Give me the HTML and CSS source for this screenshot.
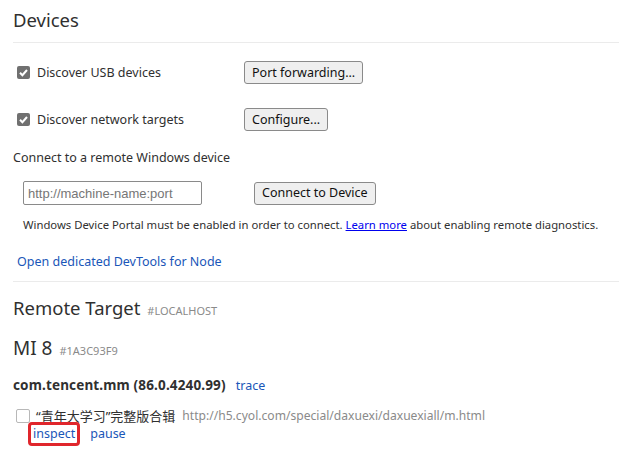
FILE: index.html
```html
<!DOCTYPE html>
<html>
<head>
<meta charset="utf-8">
<link rel="stylesheet" href="styles.css">
</head>
<body>
<div class="page">
  <section class="devices">
    <h1 class="title">Devices</h1>
    <div class="opt-row">
      <label class="opt"><span class="cb cb-on"><svg viewBox="0 0 13 13" width="13" height="13"><path d="M3 6.8 L5.4 9.2 L10 4" fill="none" stroke="#fff" stroke-width="2"/></svg></span>Discover USB devices</label>
      <button class="btn">Port forwarding...</button>
    </div>
    <div class="opt-row">
      <label class="opt"><span class="cb cb-on"><svg viewBox="0 0 13 13" width="13" height="13"><path d="M3 6.8 L5.4 9.2 L10 4" fill="none" stroke="#fff" stroke-width="2"/></svg></span>Discover network targets</label>
      <button class="btn">Configure...</button>
    </div>
    <div class="subhead">Connect to a remote Windows device</div>
    <div class="connect-row">
      <input class="addr" type="text" placeholder="http://machine-name:port">
      <button class="btn">Connect to Device</button>
    </div>
    <div class="note">Windows Device Portal must be enabled in order to connect. <a href="#" class="learn">Learn more</a> about enabling remote diagnostics.</div>
    <div class="node-link"><a href="#" class="link">Open dedicated DevTools for Node</a></div>
  </section>
  <section class="remote">
    <h1 class="title">Remote Target <span class="tag">#LOCALHOST</span></h1>
    <h2 class="device">MI 8 <span class="tag">#1A3C93F9</span></h2>
    <div class="pkg"><span class="pkg-name">com.tencent.mm (86.0.4240.99)</span><a href="#" class="link">trace</a></div>
    <div class="target">
      <span class="cb cb-off"></span>
      <span class="t-title">“青年大学习”完整版合辑</span>
      <span class="t-url">http://h5.cyol.com/special/daxuexi/daxuexiall/m.html</span>
    </div>
    <div class="actions">
      <a href="#" class="link act act-hl">inspect</a>
      <a href="#" class="link act">pause</a>
    </div>
  </section>
</div>
</body>
</html>
```
FILE: styles.css
```css
* { box-sizing: border-box; }
html, body { margin: 0; padding: 0; background: #fff; }
body {
  font-family: "Noto Sans", "Noto Sans CJK SC", sans-serif;
  font-size: 12.5px;
  color: #303030;
}
.page { padding: 0 0 0 13px; }
.title {
  margin: 0;
  font-weight: normal;
  font-size: 18.5px;
  line-height: 26px;
  color: #303030;
}
.devices .title {
  padding-top: 7px;
  height: 43px;
  border-bottom: 1px solid #ebebeb;
}
.opt-row {
  display: flex;
  align-items: center;
  height: 23px;
  margin-top: 18px;
}
.opt-row + .opt-row { margin-top: 24px; }
.opt {
  display: flex;
  align-items: center;
  width: 231px;
  padding-left: 4px;
}
.cb {
  display: inline-flex;
  width: 13px;
  height: 13px;
  border-radius: 2px;
  margin-right: 7px;
  flex: none;
}
.cb-on { background: #707070; }
.cb-off { background: #fff; border: 1px solid #b8b8b8; width: 14px; height: 14px; }
.btn {
  font-family: "Noto Sans", sans-serif;
  font-size: 12.5px;
  color: #111;
  background: #efefef;
  border: 1px solid #8a8a8a;
  border-radius: 3px;
  height: 23px;
  padding: 0 7px;
  line-height: 20px;
}
.subhead { margin-top: 17px; line-height: 20px; }
.connect-row {
  display: flex;
  align-items: center;
  margin-top: 13px;
  padding-left: 10px;
  height: 24px;
}
.addr {
  width: 179px;
  height: 24px;
  border: 1px solid #8a8a8a;
  border-radius: 2px;
  padding: 0 4px;
  font-family: "Liberation Sans", Arial, sans-serif;
  font-size: 13px;
  margin-right: 52px;
}
.addr::placeholder { color: #767676; }
.connect-row .btn { height: 23px; }
.note {
  margin-top: 10px;
  padding-left: 10px;
  font-size: 11.3px;
  line-height: 20px;
}
.learn { color: #0000ee; text-decoration: underline; }
.link { color: #1a56b8; text-decoration: none; }
.node-link { margin-top: 17px; padding-left: 4px; line-height: 20px; }
.remote { border-top: 1px solid #ebebeb; margin-top: 9px; }
.remote .title { margin-top: 13px; }
.tag { font-size: 11px; color: #8a8a8a; margin-left: 2px; }
.device {
  margin: 11px 0 0;
  font-weight: normal;
  font-size: 19px;
  line-height: 26px;
}
.pkg { margin-top: 11px; line-height: 20px; font-size: 13.5px; }
.pkg-name { font-weight: bold; margin-right: 10px; letter-spacing: 0.15px; }
.pkg .link { font-size: 12.5px; }
.target {
  display: flex;
  align-items: center;
  margin-top: 10px;
  padding-left: 3px;
  line-height: 20px;
}
.cb-off { margin-right: 6px; }
.t-title { margin-right: 7px; font-size: 13px; }
.t-url { color: #8a8a8a; font-size: 12.1px; }
.actions {
  display: flex;
  align-items: center;
  padding-left: 15px;
  line-height: 18px;
  margin-top: -4px;
}
.act { margin-right: 10px; }
.act-hl {
  display: inline-block;
  border: 3px solid #e0262c;
  border-radius: 4px;
  padding: 0 2px 0 2px;
}
```
